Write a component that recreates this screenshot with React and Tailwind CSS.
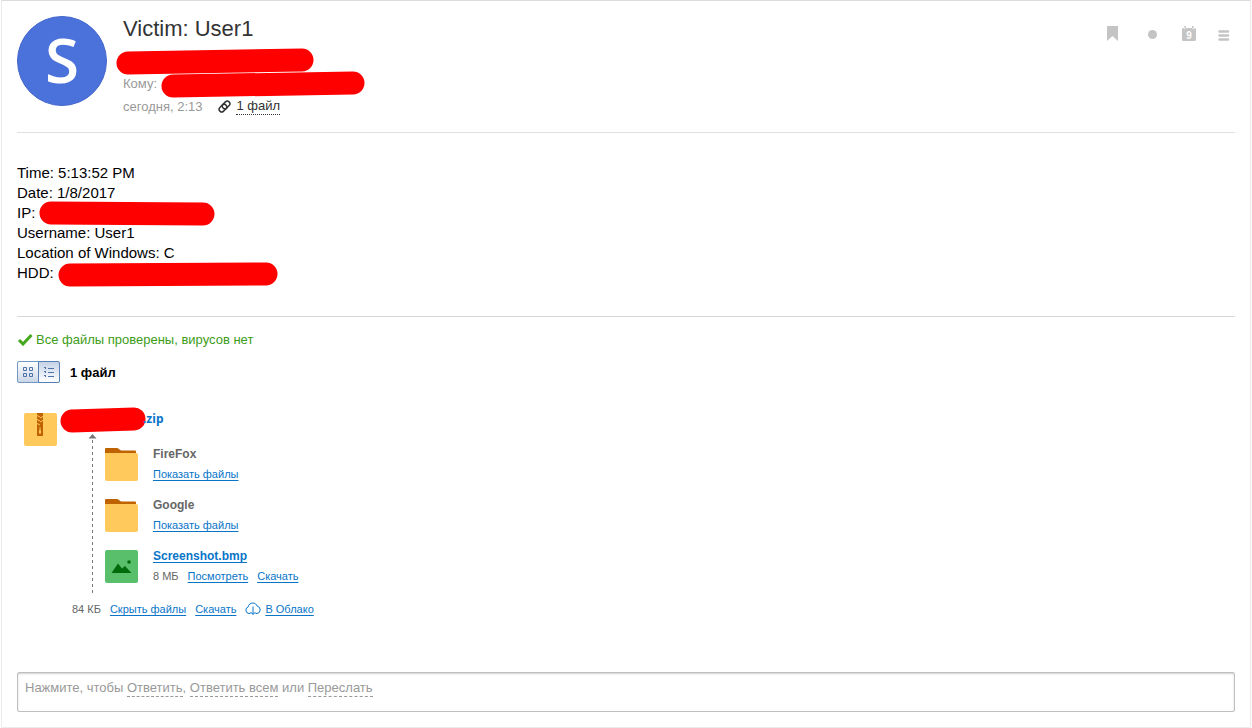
import clsx from 'clsx'

const folders = ['FireFox', 'Google']

const bodyLines = [
  { text: 'Time: 5:13:52 PM' },
  { text: 'Date: 1/8/2017' },
  { text: 'IP:', hidden: { width: 176, from: 13, to: 14 } },
  { text: 'Username: User1' },
  { text: 'Location of Windows: C' },
  { text: 'HDD:', hidden: { width: 220, from: 15, to: 14 } },
]

// Marker stroke over private data, from/to are the vertical centres of its ends
function Marker({ width, from, to, className }) {
  return (
    <svg width={width} height="26" viewBox={`0 0 ${width} 26`} className={clsx('shrink-0 overflow-visible', className)} aria-hidden="true">
      <line x1="12" y1={from} x2={width - 12} y2={to} stroke="#ff0000" strokeWidth="23" strokeLinecap="round" />
    </svg>
  )
}

function FolderIcon() {
  return (
    <svg width="33" height="33" viewBox="0 0 33 33" className="shrink-0" aria-hidden="true">
      <path d="M0 1a1 1 0 0 1 1-1h11c2 0 2.500 2.500 4.500 2.500H30a1 1 0 0 1 1 1V8H0z" fill="#bf6300" />
      <path d="M0 5h31a2 2 0 0 1 2 2v24a2 2 0 0 1-2 2H2a2 2 0 0 1-2-2z" fill="#ffc95c" />
    </svg>
  )
}

function ZipIcon() {
  return (
    <svg width="33" height="33" viewBox="0 0 33 33" className="shrink-0" aria-hidden="true">
      <rect width="33" height="33" rx="2" fill="#ffc95c" />
      <path d="M13 0h6v23h-6z" fill="#bf6300" />
      <path d="M13 2.500l3 1.500M16 5l3-1.500M13 6.500l3 1.500M16 9l3-1.500M13 10.500l3 1.500" stroke="#ffc95c" />
      <path d="M15 14.500h2v6h-2z" fill="#ffc95c" />
      <path d="M15.500 14.500h1v3h-1z" fill="#bf6300" />
    </svg>
  )
}

function ImageIcon() {
  return (
    <svg width="33" height="33" viewBox="0 0 33 33" className="shrink-0" aria-hidden="true">
      <rect width="33" height="33" rx="2" fill="#5abf6b" />
      <path d="M6.500 23l6.500-9.500 4 5 3-2.500 6.500 7z" fill="#006b0a" />
      <circle cx="24" cy="12" r="1.800" fill="#006b0a" />
    </svg>
  )
}

function FileLink({ children }) {
  return (
    <a href="#" className="text-[#0875c9] underline underline-offset-2">{children}</a>
  )
}

function Toolbar() {
  return (
    <div className="flex h-[34px] items-center pr-[5px] text-[#c4c4c4]">
      <button type="button" aria-label="Закладка" className="mr-7">
        <svg width="13" height="15" viewBox="0 0 13 15"><path d="M1 0h11v15l-5.500-5L1 15z" fill="currentColor" /></svg>
      </button>
      <button type="button" aria-label="Пометить непрочитанным" className="mr-[23px]">
        <svg width="11" height="15" viewBox="0 0 11 15"><circle cx="5.500" cy="8.500" r="4.500" fill="currentColor" /></svg>
      </button>
      <button type="button" aria-label="Календарь" className="mr-[21px]">
        <svg width="16" height="15" viewBox="0 0 16 15">
          <path d="M2.500 2H3l1 1.500L5.500 2h5L12 3.500 13.500 2a1.500 1.500 0 0 1 1.500 1.500v10a1.500 1.500 0 0 1-1.500 1.500h-11A1.500 1.500 0 0 1 1 13.500v-10A1.500 1.500 0 0 1 2.500 2z" fill="currentColor" />
          <path d="M3.500 0H5v2.500H3.500zM11 0h1.500v2.500H11z" fill="currentColor" />
          <text x="8" y="13" textAnchor="middle" fontSize="10" fontWeight="700" fontFamily="Liberation Sans, sans-serif" fill="#fff">9</text>
        </svg>
      </button>
      <button type="button" aria-label="Меню">
        <svg width="12" height="15" viewBox="0 0 12 15"><path d="M1.500 5.500h8.500M1.500 9.500h8.500M1.500 13.500h8.500" stroke="currentColor" strokeWidth="2.500" strokeLinecap="round" /></svg>
      </button>
    </div>
  )
}

function MessageHeader() {
  return (
    <header className="flex h-[117px] items-start border-b border-[#e0e0e0]">
      <div className="flex h-[90px] w-[90px] shrink-0 items-center justify-center rounded-full border border-[#4467cc] bg-[#4b71db] pb-1 font-['Open_Sans',sans-serif] text-[62px] font-semibold text-white">S</div>
      <div className="ml-4 text-[13px] leading-[23px] text-[#999]">
        <h1 className="h-[33px] text-[22px] leading-[26px] text-[#333]">Victim: User1</h1>
        <div className="-ml-[7px] flex h-[23px] items-center"><Marker width={198} from={15} to={12} /></div>
        <div className="flex h-[23px] items-center">Кому:<Marker width={204} from={15} to={12} className="ml-1" /></div>
        <div className="flex h-[23px] items-center">
          сегодня, 2:13
          <svg width="13" height="13" viewBox="0 0 13 13" className="ml-4 mr-[5px]" fill="none" stroke="#333" strokeWidth="1.500" aria-hidden="true">
            <g transform="rotate(-45 6.500 6.500)">
              <rect x="0" y="3.900" width="8.500" height="5.200" rx="2.600" />
              <rect x="4.500" y="3.900" width="8.500" height="5.200" rx="2.600" />
            </g>
          </svg>
          <a href="#files" className="border-b border-dotted border-[#333] leading-4 text-[#333]">1 файл</a>
        </div>
      </div>
      <div className="ml-auto"><Toolbar /></div>
    </header>
  )
}

function ViewSwitch() {
  return (
    <div className="flex">
      <button type="button" aria-label="Плитка" className="flex h-[22px] w-[22px] items-center justify-center rounded-l-xs border border-[#7198c4] bg-linear-to-b from-white to-[#cbd7e8]">
        <svg width="10" height="10" viewBox="0 0 10 10" fill="none" stroke="#4e73a8"><path d="M.5.5h3v3h-3zM6.500.5h3v3h-3zM.5 6.500h3v3h-3zM6.500 6.500h3v3h-3z" /></svg>
      </button>
      <button type="button" aria-label="Список" className="-ml-px flex h-[22px] w-[22px] items-center justify-center rounded-r-xs border border-[#5680b5] bg-linear-to-b from-[#c5d3e6] to-white">
        <svg width="10" height="10" viewBox="0 0 10 10" stroke="#4e73a8"><path d="M0 .5h2M1 1.500h1M4 1.500h6M0 4.500h2M1 5.500h1M4 5.500h6M0 8.500h2M1 9.500h1M4 9.500h6" /></svg>
      </button>
    </div>
  )
}

function FileRow({ icon, name, children }) {
  return (
    <li className="flex h-[51px] items-start">
      {icon}
      <div className="ml-[15px] leading-5">
        <div className="-mt-1 text-xs leading-5 font-bold">{name}</div>
        <div className="flex gap-[9px]">{children}</div>
      </div>
    </li>
  )
}

function Attachments() {
  return (
    <section id="files" className="pl-[7px] text-[11px] text-[#666]">
      <div className="flex h-[41px] items-start">
        <div className="pt-[6px]"><ZipIcon /></div>
        <Marker width={86} from={14} to={12} className="ml-[3px]" />
        <a href="#" className="-ml-[3px] text-xs leading-6 font-bold text-[#0875c9] font-['Noto_Sans',sans-serif]">.zip</a>
      </div>
      <div className="-mt-[14px] flex pl-16">
        <svg width="9" height="162" viewBox="0 0 9 162" className="shrink-0" aria-hidden="true">
          <path d="M4.500 0l4 4.500h-8z" fill="#777" />
          <path d="M4.500 6v156" stroke="#777" strokeDasharray="3 3" />
        </svg>
        <ul className="ml-2 pt-[14px]">
          {folders.map((name) => (
            <FileRow key={name} icon={<FolderIcon />} name={name}>
              <FileLink>Показать файлы</FileLink>
            </FileRow>
          ))}
          <FileRow icon={<ImageIcon />} name={<FileLink>Screenshot.bmp</FileLink>}>
            <span>8 МБ</span>
            <FileLink>Посмотреть</FileLink>
            <FileLink>Скачать</FileLink>
          </FileRow>
        </ul>
      </div>
      <div className="flex items-center gap-[9px] pl-12 leading-4">
        <span>84 КБ</span>
        <FileLink>Скрыть файлы</FileLink>
        <FileLink>Скачать</FileLink>
        <span className="flex items-center gap-1">
          <svg width="16" height="14" viewBox="0 0 16 14" fill="none" stroke="#0875c9" aria-hidden="true">
            <path d="M5.500 11.500H4A3.400 3.400 0 0 1 3.200 4.900C3.500 2.500 5.500 1 7.800 1c2.100 0 3.900 1.300 4.400 3.200A3.700 3.700 0 0 1 12 11.500h-1.500M8 4.500v8M5.500 10L8 12.500l2.500-2.500" />
          </svg>
          <FileLink>В Облако</FileLink>
        </span>
      </div>
    </section>
  )
}

function ReplyLink({ children }) {
  return <button type="button" className="border-b border-dashed border-[#999] leading-4">{children}</button>
}

export default function App() {
  return (
    <main className="mx-px rounded-b-xs border border-[#ebebeb] border-t-[#dcdcdc] bg-white px-[15px] pt-[15px] pb-[15px] font-['Liberation_Sans',Arial,sans-serif] text-black">
      <MessageHeader />

      <article className="border-b border-[#d8d8d8] pt-[30px] pb-[33px] text-[15px] leading-5">
        {bodyLines.map(({ text, hidden }) => (
          <div key={text} className="flex h-5 items-center">
            {text}
            {hidden ? <Marker {...hidden} className="ml-1" /> : null}
          </div>
        ))}
      </article>

      <div className="mt-[14px] flex h-[18px] items-center gap-[3px] text-[13px] text-[#3d9c18]">
        <svg width="16" height="12" viewBox="0 0 16 12" aria-hidden="true"><path d="M2 6l4 4 8.500-9" fill="none" stroke="#45a81e" strokeWidth="3" /></svg>
        Все файлы проверены, вирусов нет
      </div>

      <div className="mt-3 mb-6 flex items-center gap-[10px] text-[13px] font-bold">
        <ViewSwitch />
        <span className="pt-px">1 файл</span>
      </div>

      <Attachments />

      <div className="mt-[55px] h-10 rounded-xs border border-[#bfbfbf] px-[7px] pt-[6px] text-[13px] leading-[18px] text-[#999] inset-shadow-[0_1px_2px_#d0d0d0]">
        Нажмите, чтобы <ReplyLink>Ответить</ReplyLink>, <ReplyLink>Ответить всем</ReplyLink> или <ReplyLink>Переслать</ReplyLink>
      </div>
    </main>
  )
}
